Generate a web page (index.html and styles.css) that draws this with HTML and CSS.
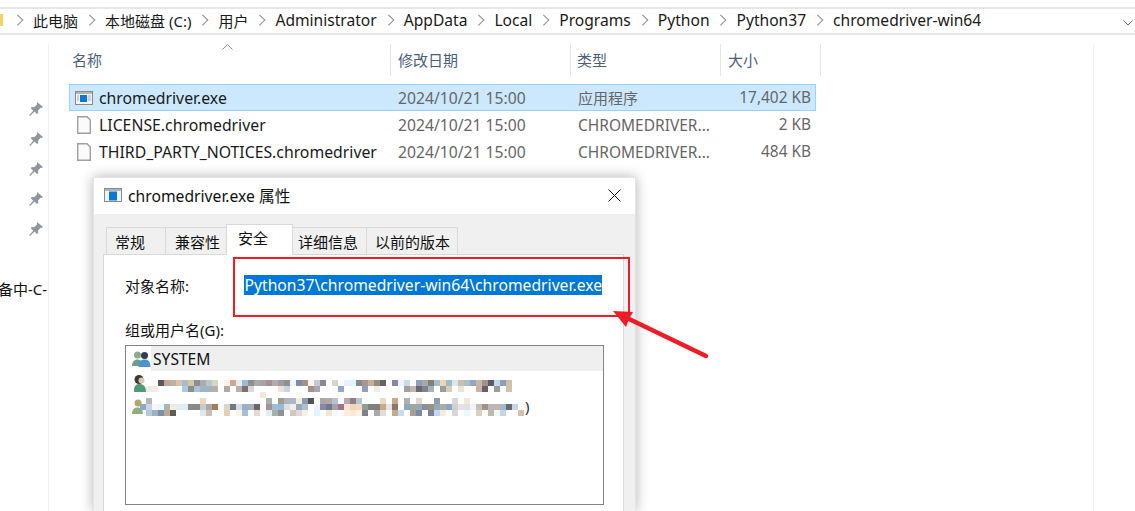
FILE: index.html
```html
<!DOCTYPE html>
<html lang="zh-CN">
<head>
<meta charset="utf-8">
<title>chromedriver.exe 属性</title>
<link rel="stylesheet" href="styles.css">
</head>
<body>
<div class="explorer">
  <nav class="crumbs">
    <span class="folder-tip"></span>
    <span class="sep"></span><span>此电脑</span>
    <span class="sep"></span><span>本地磁盘 (C:)</span>
    <span class="sep"></span><span>用户</span>
    <span class="sep"></span><span class="lat">Administrator</span>
    <span class="sep"></span><span class="lat">AppData</span>
    <span class="sep"></span><span class="lat">Local</span>
    <span class="sep"></span><span class="lat">Programs</span>
    <span class="sep"></span><span class="lat">Python</span>
    <span class="sep"></span><span class="lat">Python37</span>
    <span class="sep"></span><span class="lat">chromedriver-win64</span>
    <svg class="chev" width="10" height="6" viewBox="0 0 10 6"><path d="M.5.5 5 5 9.500.5" fill="none" stroke="#666"/></svg>
  </nav>
  <div class="main">
    <aside class="side">
      <svg class="pin" width="16" height="16" viewBox="0 0 16 16"><path d="M9 1l6 5-1.500 1-1-.3-2.500 3 .3 2.300-1.300 1-2.500-2.500L2 15l-.8-.8 4-4.500-2.400-2.500 1-1.200 2.300.2 2.900-2.700z" fill="#8f969c"/></svg>
      <svg class="pin" width="16" height="16" viewBox="0 0 16 16"><path d="M9 1l6 5-1.500 1-1-.3-2.500 3 .3 2.300-1.300 1-2.500-2.500L2 15l-.8-.8 4-4.500-2.400-2.500 1-1.200 2.300.2 2.900-2.700z" fill="#8f969c"/></svg>
      <svg class="pin" width="16" height="16" viewBox="0 0 16 16"><path d="M9 1l6 5-1.500 1-1-.3-2.500 3 .3 2.300-1.300 1-2.500-2.500L2 15l-.8-.8 4-4.500-2.400-2.500 1-1.200 2.300.2 2.900-2.700z" fill="#8f969c"/></svg>
      <svg class="pin" width="16" height="16" viewBox="0 0 16 16"><path d="M9 1l6 5-1.500 1-1-.3-2.500 3 .3 2.300-1.300 1-2.500-2.500L2 15l-.8-.8 4-4.500-2.400-2.500 1-1.200 2.300.2 2.900-2.700z" fill="#8f969c"/></svg>
      <svg class="pin" width="16" height="16" viewBox="0 0 16 16"><path d="M9 1l6 5-1.500 1-1-.3-2.500 3 .3 2.300-1.300 1-2.500-2.500L2 15l-.8-.8 4-4.500-2.400-2.500 1-1.200 2.300.2 2.900-2.700z" fill="#8f969c"/></svg>
      <div class="side-label">备中-C-</div>
    </aside>
    <section class="files">
      <div class="sort-mark"><svg width="11" height="6" viewBox="0 0 11 6"><path d="M.5 5.500 5.500.5l5 5" fill="none" stroke="#8a8a8a"/></svg></div>
      <div class="cols">
        <div class="col c-name">名称</div>
        <div class="col c-date">修改日期</div>
        <div class="col c-type">类型</div>
        <div class="col c-size">大小</div>
      </div>
      <div class="row selected">
        <svg class="ficon" width="18" height="14" viewBox="0 0 18 14"><rect x=".5" y=".5" width="17" height="13" fill="#f4f4f4" stroke="#8a8a8a"/><rect x="1" y="1" width="16" height="2" fill="#aeb4ba"/><rect x="5" y="4" width="7" height="7" fill="#0a78d7"/><path d="M2 5h2M2 7h2M2 9h2M13 5h3M13 7h3M13 9h3" stroke="#aab"/></svg>
        <span class="c-name name-text">chromedriver.exe</span>
        <span class="c-date dim">2024/10/21 15:00</span>
        <span class="c-type dim zh">应用程序</span>
        <span class="c-size dim right">17,402 KB</span>
      </div>
      <div class="row">
        <svg class="ficon" width="18" height="18" viewBox="0 0 18 18"><path d="M2.700.7h9.300l3.300 3.300v13.300H2.700z" fill="#fbfbfb" stroke="#a0a0a0" stroke-width="1.400"/></svg>
        <span class="c-name name-text">LICENSE.chromedriver</span>
        <span class="c-date dim">2024/10/21 15:00</span>
        <span class="c-type dim">CHROMEDRIVER...</span>
        <span class="c-size dim right">2 KB</span>
      </div>
      <div class="row">
        <svg class="ficon" width="18" height="18" viewBox="0 0 18 18"><path d="M2.700.7h9.300l3.300 3.300v13.300H2.700z" fill="#fbfbfb" stroke="#a0a0a0" stroke-width="1.400"/></svg>
        <span class="c-name name-text">THIRD_PARTY_NOTICES.chromedriver</span>
        <span class="c-date dim">2024/10/21 15:00</span>
        <span class="c-type dim">CHROMEDRIVER...</span>
        <span class="c-size dim right">484 KB</span>
      </div>
    </section>
    <div class="pane-edge"></div>
  </div>
</div>

<div class="dialog">
  <header class="titlebar">
    <svg class="ficon-t" width="18" height="14" viewBox="0 0 18 14"><rect x=".5" y=".5" width="17" height="13" fill="#f4f4f4" stroke="#8a8a8a"/><rect x="1" y="1" width="16" height="2" fill="#aeb4ba"/><rect x="5" y="3.500" width="8" height="9" fill="#0a78d7"/></svg>
    <span class="title">chromedriver.exe 属性</span>
    <svg class="close" width="13" height="13" viewBox="0 0 13 13"><path d="M.5.500l12 12M12.500.500l-12 12" stroke="#111" stroke-width="1"/></svg>
  </header>
  <div class="dlg-body">
    <div class="tabs">
      <span class="tab t1">常规</span>
      <span class="tab t2">兼容性</span>
      <span class="tab active">安全</span>
      <span class="tab t4">详细信息</span>
      <span class="tab t5">以前的版本</span>
    </div>
    <div class="panel">
      <div class="objrow">
        <span class="objlabel">对象名称:</span>
        <span class="objval">Python37\chromedriver-win64\chromedriver.exe</span>
      </div>
      <div class="grouplabel">组或用户名(G):</div>
      <div class="listbox">
        <div class="li sys">
          <span class="sys-icon"><svg width="19" height="16" viewBox="0 0 19 16"><circle cx="5.500" cy="4" r="3.500" fill="#8fa98f"/><path d="M0 15c0-5 3-6.500 5.500-6.500s5 2 5 6.500z" fill="#6f9f80"/><circle cx="12.500" cy="4.500" r="3.500" fill="#2d3f58"/><path d="M6.500 16c0-6 3-7.500 6-7.500s6 1.500 6 7.500z" fill="#4d93cf"/></svg></span>
          <span class="lat">SYSTEM</span>
        </div>
        <div class="li user1"><svg width="12" height="17" viewBox="0 0 12 17"><circle cx="5" cy="4.500" r="4.500" fill="#3c3a33"/><circle cx="7.500" cy="5.500" r="3" fill="#d8c7b4"/><path d="M0 17c-.5-6 2-8 5.500-8s6.500 2 6.500 8z" fill="#4e9a78"/></svg></div>
        <div class="li user2"><svg width="11" height="15" viewBox="0 0 11 15"><circle cx="6" cy="4" r="3.500" fill="#b9a36d"/><path d="M0 15c0-5 2.500-6.500 5.500-6.500s5.500 1.500 5.500 6.500z" fill="#8fb07d"/></svg></div>
        <svg class="mosaic" width="390" height="36" viewBox="0 0 65 6" shape-rendering="crispEdges" fill="none" stroke-width="1">
          <path stroke="#5d555f" d="M3 .5h1"/><path stroke="#c4a892" d="M4 .5h1"/><path stroke="#b9b2a8" d="M5 .5h1"/><path stroke="#dfc0a0" d="M6 .5h1"/><path stroke="#a5bcd3" d="M7 .5h1"/><path stroke="#d8c8a0" d="M8 .5h1"/><path stroke="#8a8f99" d="M9 .5h1"/><path stroke="#b0aaa8" d="M10 .5h1"/><path stroke="#b8c8d0" d="M11 .5h1"/><path stroke="#d8d8c0" d="M12 .5h1"/><path stroke="#fdf0e8" d="M14 .5h1"/><path stroke="#cfa890" d="M15 .5h1"/><path stroke="#e8eef0" d="M16 .5h1"/><path stroke="#a0b8d4" d="M17 .5h1"/><path stroke="#8c9090" d="M18 .5h1"/><path stroke="#aaaaaa" d="M19 .5h1"/><path stroke="#a8a4a0" d="M20 .5h1"/><path stroke="#a89098" d="M21 .5h1"/><path stroke="#b4aab0" d="M22 .5h1"/><path stroke="#9d9da8" d="M23 .5h1"/><path stroke="#909090" d="M24 .5h1"/><path stroke="#eef6fb" d="M25 .5h1"/><path stroke="#7d8ca8" d="M26 .5h1"/><path stroke="#a89088" d="M27 .5h1"/><path stroke="#f8f8f0" d="M28 .5h1"/><path stroke="#c8c8d0" d="M29 .5h1"/><path stroke="#8a8a90" d="M30 .5h1"/><path stroke="#dcd4c8" d="M32 .5h1"/><path stroke="#eeeeff" d="M34 .5h1"/><path stroke="#e0f4fc" d="M35 .5h1"/><path stroke="#888890" d="M36 .5h1"/><path stroke="#a89890" d="M37 .5h1"/><path stroke="#c8b098" d="M38 .5h1"/><path stroke="#909080" d="M39 .5h1"/><path stroke="#6a625c" d="M40 .5h1"/><path stroke="#8a84a0" d="M42 .5h1"/><path stroke="#f0f4f8" d="M43 .5h1"/><path stroke="#c8dcec" d="M44 .5h1"/><path stroke="#8ca0bc" d="M46 .5h1"/><path stroke="#a8a8a4" d="M47 .5h1"/><path stroke="#7a8478" d="M48 .5h1"/><path stroke="#a8bcc8" d="M49 .5h1"/><path stroke="#f0d4b0" d="M50 .5h1"/><path stroke="#9cbcc8" d="M51 .5h1"/><path stroke="#d8e8ec" d="M52 .5h1"/><path stroke="#c8c0b0" d="M53 .5h1"/><path stroke="#b0bcc4" d="M54 .5h1"/><path stroke="#90a8c4" d="M55 .5h1"/><path stroke="#c8b8a8" d="M56 .5h1"/><path stroke="#9c9484" d="M57 .5h1"/><path stroke="#605868" d="M58 .5h1"/><path stroke="#c4d8f0" d="M59 .5h1"/><path stroke="#8ca0bc" d="M60 .5h1"/><path stroke="#d0c0ac" d="M61 .5h1"/>

          <path stroke="#e8eee8" d="M1 1.500h1"/><path stroke="#f4ece0" d="M2 1.500h1"/><path stroke="#b0c8e0" d="M7 1.500h1"/><path stroke="#8a9088" d="M8 1.500h1"/><path stroke="#a8c4dc" d="M9 1.500h1"/><path stroke="#a0b4c8" d="M10 1.500h2"/><path stroke="#b8b0a8" d="M12 1.500h1"/><path stroke="#b0a8a0" d="M14 1.500h1"/><path stroke="#b8b0a8" d="M16 1.500h1"/><path stroke="#7a7078" d="M17 1.500h1"/><path stroke="#d8d8d8" d="M18 1.500h1"/><path stroke="#f0e0d8" d="M23 1.500h1"/><path stroke="#c8d4e0" d="M24 1.500h1"/><path stroke="#a89088" d="M28 1.500h1"/><path stroke="#a8a8b0" d="M29 1.500h1"/><path stroke="#90a8cc" d="M33 1.500h1"/><path stroke="#90a0b8" d="M37 1.500h1"/><path stroke="#f4ece0" d="M39 1.500h1"/><path stroke="#a0a0a0" d="M44 1.500h1"/><path stroke="#c0b8b0" d="M45 1.500h1"/><path stroke="#6c6870" d="M46 1.500h1"/><path stroke="#808090" d="M47 1.500h1"/><path stroke="#a8b0bc" d="M48 1.500h1"/><path stroke="#9c9c9c" d="M50 1.500h1"/><path stroke="#d8ccb8" d="M51 1.500h1"/><path stroke="#e8e4dc" d="M53 1.500h1"/><path stroke="#c8b4a4" d="M56 1.500h1"/><path stroke="#6c5c6c" d="M57 1.500h1"/><path stroke="#9c9c9c" d="M59 1.500h1"/><path stroke="#d0c0ac" d="M61 1.500h1"/>

          <path stroke="#f0e8dc" d="M20 2.500h1"/>

          <path stroke="#b4b4b4" d="M1 3.500h1"/><path stroke="#f0d8c0" d="M10 3.500h1"/><path stroke="#a8b0a8" d="M21 3.500h1"/><path stroke="#a09c90" d="M23 3.500h1"/><path stroke="#b0b4c0" d="M24 3.500h1"/><path stroke="#b0b8c8" d="M25 3.500h1"/><path stroke="#f4ecdc" d="M26 3.500h1"/><path stroke="#8a9cac" d="M27 3.500h1"/><path stroke="#505458" d="M28 3.500h1"/><path stroke="#a8a8a8" d="M30 3.500h1"/><path stroke="#b8a8a0" d="M31 3.500h1"/><path stroke="#b4c4d8" d="M32 3.500h1"/><path stroke="#b8a8b0" d="M34 3.500h1"/><path stroke="#8c8084" d="M35 3.500h1"/><path stroke="#b8c4cc" d="M36 3.500h1"/><path stroke="#e4dcc8" d="M40 3.500h1"/><path stroke="#c8a888" d="M42 3.500h1"/><path stroke="#b0b0b0" d="M44 3.500h1"/><path stroke="#e0d8d0" d="M46 3.500h1"/><path stroke="#8c9ca8" d="M49 3.500h1"/><path stroke="#d8d8d8" d="M52 3.500h1"/><path stroke="#f0e8d8" d="M54 3.500h1"/>

          <path stroke="#88a8cc" d="M0 4.500h1"/><path stroke="#c8d4e4" d="M1 4.500h1"/><path stroke="#f4f8f8" d="M2 4.500h1"/><path stroke="#e8f8fc" d="M3 4.500h1"/><path stroke="#a8b8b0" d="M4 4.500h1"/><path stroke="#f4ece0" d="M5 4.500h1"/><path stroke="#e4ecf0" d="M6 4.500h1"/><path stroke="#dceef4" d="M7 4.500h1"/><path stroke="#8a8a88" d="M8 4.500h2"/><path stroke="#c8ccc8" d="M10 4.500h1"/><path stroke="#a8a8b0" d="M11 4.500h1"/><path stroke="#a07c58" d="M12 4.500h1"/><path stroke="#f4fcfc" d="M13 4.500h1"/><path stroke="#d8d8c8" d="M14 4.500h1"/><path stroke="#707888" d="M15 4.500h1"/><path stroke="#d8dce0" d="M16 4.500h1"/><path stroke="#98b0d0" d="M17 4.500h1"/><path stroke="#a8b0b8" d="M18 4.500h1"/><path stroke="#706468" d="M19 4.500h1"/><path stroke="#a09098" d="M21 4.500h1"/><path stroke="#a0bcd8" d="M22 4.500h1"/><path stroke="#98b8d8" d="M23 4.500h1"/><path stroke="#e0e0e0" d="M24 4.500h1"/><path stroke="#f0eee8" d="M25 4.500h1"/><path stroke="#98a8b8" d="M26 4.500h1"/><path stroke="#a8c0d8" d="M27 4.500h1"/><path stroke="#f0f0f8" d="M29 4.500h1"/><path stroke="#8888a8" d="M30 4.500h1"/><path stroke="#6a7c90" d="M31 4.500h1"/><path stroke="#a8a0a8" d="M32 4.500h1"/><path stroke="#987888" d="M33 4.500h1"/><path stroke="#f8e4d0" d="M34 4.500h1"/><path stroke="#f4d4b8" d="M35 4.500h1"/><path stroke="#f4d8c0" d="M36 4.500h1"/><path stroke="#8ca098" d="M37 4.500h1"/><path stroke="#808080" d="M38 4.500h2"/><path stroke="#c8a888" d="M40 4.500h1"/><path stroke="#e8e4e0" d="M41 4.500h1"/><path stroke="#8a7868" d="M42 4.500h1"/><path stroke="#8ca8c8" d="M44 4.500h1"/><path stroke="#a0a898" d="M45 4.500h1"/><path stroke="#98a8b8" d="M46 4.500h1"/><path stroke="#889098" d="M47 4.500h1"/><path stroke="#9c9080" d="M48 4.500h1"/><path stroke="#98a8b4" d="M49 4.500h1"/><path stroke="#a8b0a4" d="M50 4.500h1"/><path stroke="#88a8c8" d="M51 4.500h1"/><path stroke="#d0d0d0" d="M52 4.500h1"/><path stroke="#e8e0e8" d="M53 4.500h1"/><path stroke="#e0e0e0" d="M54 4.500h1"/><path stroke="#f4f4f4" d="M55 4.500h1"/><path stroke="#c0c0c0" d="M56 4.500h1"/><path stroke="#a89088" d="M57 4.500h1"/><path stroke="#b8b8c0" d="M58 4.500h1"/><path stroke="#c8b4a8" d="M59 4.500h1"/><path stroke="#a0b8d4" d="M60 4.500h1"/><path stroke="#686870" d="M61 4.500h1"/><path stroke="#c8d4e4" d="M62 4.500h1"/>

          <path stroke="#b4c8e0" d="M1 5.500h1"/><path stroke="#a0b0c0" d="M2 5.500h1"/><path stroke="#7a90a8" d="M3 5.500h1"/><path stroke="#c0a890" d="M4 5.500h1"/><path stroke="#5a6058" d="M5 5.500h1"/><path stroke="#e0e8ec" d="M10 5.500h1"/><path stroke="#c8c0b4" d="M11 5.500h1"/><path stroke="#e0d0b8" d="M14 5.500h1"/><path stroke="#f8f4ec" d="M16 5.500h1"/><path stroke="#a8bcd0" d="M17 5.500h1"/><path stroke="#e0dcd0" d="M19 5.500h1"/><path stroke="#e0eef4" d="M21 5.500h1"/><path stroke="#a8b0a8" d="M22 5.500h1"/><path stroke="#889890" d="M23 5.500h1"/><path stroke="#d0c8c0" d="M25 5.500h1"/><path stroke="#e0d8dc" d="M26 5.500h1"/><path stroke="#f8f0e8" d="M27 5.500h1"/><path stroke="#e0f4fc" d="M29 5.500h1"/><path stroke="#f8e4d0" d="M31 5.500h1"/><path stroke="#f0fcfc" d="M32 5.500h1"/><path stroke="#fcece0" d="M34 5.500h1"/><path stroke="#f8e8d8" d="M35 5.500h1"/><path stroke="#fcf0e8" d="M36 5.500h1"/><path stroke="#808088" d="M37 5.500h1"/><path stroke="#a8a8a8" d="M39 5.500h1"/><path stroke="#e0dce0" d="M40 5.500h1"/><path stroke="#c8a88c" d="M42 5.500h1"/><path stroke="#c4dcf4" d="M43 5.500h1"/><path stroke="#a8a094" d="M45 5.500h1"/><path stroke="#7a8ca0" d="M46 5.500h1"/><path stroke="#808094" d="M48 5.500h1"/><path stroke="#c0d8f0" d="M49 5.500h1"/><path stroke="#f4ece0" d="M50 5.500h1"/><path stroke="#d8d8d8" d="M52 5.500h1"/><path stroke="#eef8fc" d="M54 5.500h1"/><path stroke="#d8d0c0" d="M56 5.500h1"/><path stroke="#c0b8b0" d="M58 5.500h1"/><path stroke="#e8fcf0" d="M59 5.500h1"/><path stroke="#c8d4dc" d="M60 5.500h1"/><path stroke="#d0c0b0" d="M63 5.500h1"/>
        </svg>
        <span class="paren">)</span>
      </div>
    </div>
  </div>
</div>

<div class="redbox"></div>
<svg class="arrow" width="110" height="50" viewBox="0 0 110 50"><path d="M14 8 93 46" fill="none" stroke="#ee1c25" stroke-width="4.500" stroke-linecap="round"/><path d="M0 1l20 1-4 7-3 8z" fill="#ee1c25"/></svg>
</body>
</html>
```

FILE: styles.css
```css
* { box-sizing: border-box; }
html, body { margin: 0; height: 511px; overflow: hidden; background: #fff; }
body {
  position: relative;
  font-family: "Noto Sans", "Noto Sans CJK SC", sans-serif;
  font-size: 15px;
  color: #1a1a1a;
}
.lat { font-size: 15.6px; }
.explorer { display: flex; flex-direction: column; height: 511px; padding-top: 7px; }
.crumbs {
  height: 28px;
  border-top: 2px solid #e6e6e6;
  border-bottom: 2px solid #e6e6e6;
  padding-bottom: 2px;
  display: flex;
  align-items: center;
  gap: 8.500px;
  white-space: nowrap;
  position: relative;
}
.folder-tip { width: 3px; height: 12px; background: #f6d365; margin-right: 3px; }
.sep { width: 10px; height: 10px; display: flex; align-items: center; justify-content: center; }
.sep::before {
  content: "";
  width: 6.500px;
  height: 6.500px;
  border-top: 1.400px solid #8a8a8a;
  border-right: 1.400px solid #8a8a8a;
  transform: translateX(-2px) rotate(45deg);
}
.chev { position: absolute; left: 1123px; top: 11px; }
.main { flex: 1; display: flex; padding-top: 9px; }
.side {
  width: 49px;
  border-right: 1px solid #f0f0f0;
  padding-top: 57px;
  display: flex;
  flex-direction: column;
  align-items: flex-end;
  padding-right: 4px;
  gap: 14px;
  position: relative;
}
.side-label { position: absolute; left: -2px; top: 234px; white-space: nowrap; color: #111; font-size: 15px; }
.files { width: 768px; margin-left: 20px; position: relative; }
.sort-mark { position: absolute; left: 153px; top: 0; line-height: 0; }
.cols { display: flex; height: 32px; align-items: center; color: #4c607a; font-size: 15px; }
.col { height: 32px; line-height: 32px; border-right: 1px solid #e5e5e5; padding-left: 3px; }
.col.c-name { width: 322px; }
.col.c-date { width: 180px; padding-left: 7px; }
.col.c-type { width: 150px; padding-left: 6px; }
.col.c-size { width: 100px; padding-left: 7px; }
.row {
  display: flex;
  align-items: center;
  height: 27px;
  position: relative;
  border: 1px solid transparent;
  padding-left: 5px;
}
.selected { background: #cce8ff; border-color: #99d1ff; margin-top: 8px; width: 747px; }
.ficon { width: 18px; flex: none; margin-right: 6px; }
.name-text { width: 299px; white-space: nowrap; color: #1a1a1a; font-size: 15.800px; }
.row .c-date { width: 180px; }
.row .c-type { width: 120px; font-size: 15.500px; }
.row .c-type.zh { font-size: 15px; }
.row .c-size { width: 113px; font-size: 15.400px; }
.dim { color: #666; white-space: nowrap; font-size: 15.700px; }
.right { text-align: right; }
.pane-edge { margin-left: 256px; width: 1px; background: #f2f2f2; }
.dialog {
  position: absolute;
  left: 93px;
  top: 177px;
  width: 543px;
  height: 334px;
  background: #f0f0f0;
  box-shadow: 0 0 12px rgba(0,0,0,.3);
  border: 1px solid #e4e4e4;
  border-bottom: 0;
}
.titlebar { height: 36px; background: #fff; display: flex; align-items: center; padding: 0 14px 2px 10px; gap: 6px; }
.title { flex: 1; color: #111; font-size: 15.700px; }
.dlg-body { padding: 13px 11px 0 9px; }
.tabs { display: flex; height: 27px; align-items: flex-end; font-size: 15px; color: #111; }
.tab { height: 27px; background: #f0f0f0; border: 1px solid #d9d9d9; border-bottom: 0; line-height: 28px; margin-left: -1px; white-space: nowrap; }
.t1 { width: 60px; margin-left: 3px; padding-left: 8px; }
.t2 { width: 62px; padding-left: 9px; }
.t4 { width: 75px; padding-left: 5px; }
.t5 { width: 92px; padding-left: 8px; }
.tab.active { width: 67px; height: 31px; line-height: 27px; background: #fff; position: relative; z-index: 2; margin-bottom: -1px; padding-left: 11px; }
.panel { background: #fff; border: 1px solid #d9d9d9; border-bottom: 0; height: 257px; width: 521px; padding: 0 21px; }
.objrow { display: flex; align-items: center; height: 60px; }
.objlabel { width: 120px; color: #111; }
.objval { background: #0078d7; color: #fff; white-space: nowrap; font-size: 15.700px; line-height: 20px; }
.grouplabel { color: #111; margin-top: 4px; line-height: 22px; }
.listbox { border: 1px solid #82828c; width: 479px; height: 160px; margin-top: 4px; position: relative; }
.li { display: flex; align-items: center; color: #111; }
.sys { background: #efefef; height: 25px; gap: 2px; }
.sys-icon { width: 25px; height: 25px; background: #fff; display: flex; align-items: center; padding-left: 6px; }
.user1 { height: 24px; padding-left: 8px; }
.user2 { height: 22px; padding-left: 6px; }
.mosaic { position: absolute; left: 14px; top: 34px; }
.paren { position: absolute; left: 399px; top: 50px; font-size: 15px; line-height: 20px; color: #333; }
.redbox { position: absolute; left: 233px; top: 257px; width: 397px; height: 60px; border: 2px solid #ee1c25; }
.arrow { position: absolute; left: 613px; top: 310px; }
```
